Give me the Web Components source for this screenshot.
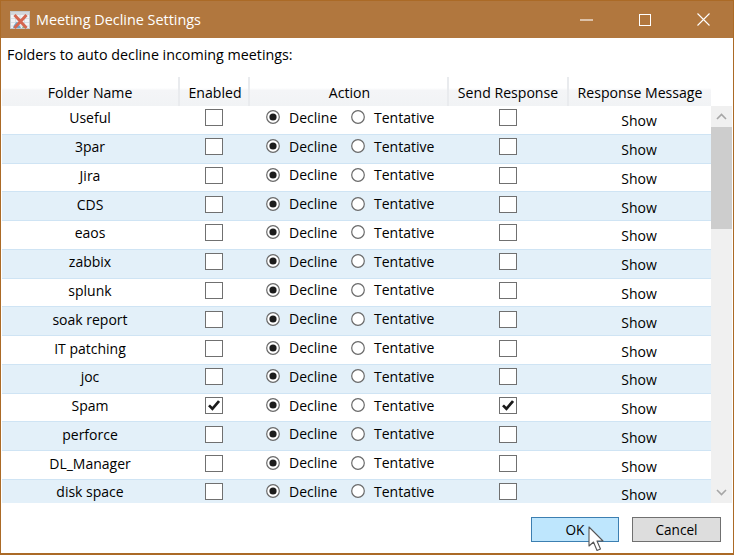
<!DOCTYPE html>
<html><head><meta charset="utf-8"><style>
html,body{margin:0;padding:0;background:#fff}
body{font-family:"Open Sans","Noto Sans",sans-serif;font-size:14px;color:#000}
</style></head><body>
<decline-dialog heading="Meeting Decline Settings"></decline-dialog>
<script>
const def=(n,css,html)=>customElements.define(n,class extends HTMLElement{
  connectedCallback(){if(this.shadowRoot)return;const s=this.attachShadow({mode:'open'});s.innerHTML=`<style>${css}</style>${typeof html==='function'?html(this):html}`;}
});
def('x-check',`:host{display:block;width:18px;height:17px;box-sizing:border-box;border:1.4px solid #707070;background:#fff;position:relative}svg{position:absolute;left:2px;top:2px}`,
 h=>h.hasAttribute('checked')?`<svg width="12" height="11" viewBox="0 0 12 11"><path d="M1 5.4 4.4 8.8 11 1" fill="none" stroke="#1a1a1a" stroke-width="2.7"/></svg>`:'');
def('x-radio',`:host{display:flex;align-items:center;gap:9px}svg{flex:none;display:block}`,
 h=>`<svg width="14" height="14" viewBox="0 0 14 14"><circle cx="7" cy="7" r="6.3" fill="#fff" stroke="#6a6a6a" stroke-width="1.2"/>${h.hasAttribute('checked')?'<circle cx="7" cy="7" r="3.6" fill="#1c1c1c"/>':''}</svg><slot></slot>`);
def('x-btn',`:host{display:flex;align-items:center;justify-content:center;box-sizing:border-box;height:25px;border:1.4px solid #707070;background:#ddd;font-size:13.6px;color:#000}:host([hot]){background:#bee6fd;border-color:#3c7fb1}`,`<slot></slot>`);
def('title-bar',`:host{display:flex;align-items:center;height:37px;background:#b1773e;color:#fff;font-size:14.4px;flex:none}
 .ic{margin:0 6px 0 9px;display:block}.t{flex:1;padding-bottom:1px}
 .b{width:58.5px;height:37px;display:flex;align-items:center;justify-content:center}.b svg{display:block}.end{margin-right:0}`,
 h=>`<svg class="ic" width="20" height="20" viewBox="0 0 20 20"><rect x=".5" y="1.5" width="19" height="17" fill="#f1f3f5" stroke="#c3c6c9"/><rect x="1" y="2" width="18" height="3" fill="#d4d7db"/><path d="M1 8.5H19M1 12.5H19M1 16H19M5.5 5V18M10 5V18M14.5 5V18" stroke="#cfd4da" stroke-width=".7"/><path d="M4 15 7 11.5 11 18H3Z" fill="#6ea7cc"/><path d="M12 18 14 14 17 18Z" fill="#8fb37a"/><path d="M4.5 5 16.5 18M16.5 5 4.5 18" stroke="#d5664f" stroke-width="3"/></svg>
 <span class="t">${h.getAttribute('heading')}</span>
 <span class="b"><svg width="13" height="2" viewBox="0 0 13 2"><path d="M0 1H13" stroke="#fff" stroke-width="1.1"/></svg></span>
 <span class="b"><svg width="12" height="12" viewBox="0 0 12 12"><rect x=".5" y=".5" width="11" height="11" fill="none" stroke="#fff"/></svg></span>
 <span class="b end"><svg width="13" height="13" viewBox="0 0 13 13"><path d="M.5.5 12.5 12.5M12.5.5.5 12.5" stroke="#fff" stroke-width="1.1"/></svg></span>`);
const cols='178px 70px 199px 120px 142px';
def('head-row',`:host{display:grid;grid-template-columns:${cols};height:29px;width:709px;background:linear-gradient(#fff 0,#fff 38%,#f4f5f7 46%,#f1f3f5 100%)}
 span{display:flex;align-items:flex-end;justify-content:center;padding-bottom:4px;box-sizing:border-box;font-size:14.1px;color:#000;border-right:2px solid #e9ebee;white-space:nowrap}span:last-child{border-right:0}span:nth-child(3){padding-left:2px}span:nth-child(4){padding-left:2px}`,
 `<span>Folder Name</span><span>Enabled</span><span>Action</span><span>Send Response</span><span>Response Message</span>`);
def('folder-row',`:host{display:grid;grid-template-columns:${cols};height:28.77px;box-sizing:border-box;border-bottom:1px solid #cfe4f4;background:#fff;font-size:14px;color:#000}
 :host([alt]){background:#e3f0f9}
 .c{display:flex;align-items:center;justify-content:center;padding-bottom:3px;min-width:0;white-space:nowrap}
 .a{display:grid;grid-template-columns:85px auto;justify-content:start;padding-left:16px;padding-bottom:5px;}
 .n{padding-bottom:4px;padding-right:2px}
 .e{padding-bottom:4px;padding-right:2px}
 .s{padding-top:2px;padding-bottom:0;padding-right:2px}`,
 h=>{const ck=h.hasAttribute('checked')?'checked':'';return `<div class="c n">${h.getAttribute('name')}</div><div class="c e"><x-check ${ck}></x-check></div><div class="c a"><x-radio checked>Decline</x-radio><x-radio>Tentative</x-radio></div><div class="c e"><x-check ${ck}></x-check></div><div class="c s">Show</div>`});
def('scroll-bar',`:host{display:flex;flex-direction:column;width:21px;background:#f0f0f0;flex:none}
 .b{height:21px;display:flex;align-items:center;justify-content:center;flex:none}.th{height:102px;background:#cdcdcd;flex:none}.sp{flex:1}`,
 `<div class="b"><svg width="11" height="7" viewBox="0 0 11 7"><path d="M1 6 5.5 1.5 10 6" fill="none" stroke="#a6a6a6" stroke-width="1.6"/></svg></div><div class="th"></div><div class="sp"></div><div class="b"><svg width="11" height="7" viewBox="0 0 11 7"><path d="M1 1 5.5 5.5 10 1" fill="none" stroke="#a6a6a6" stroke-width="1.6"/></svg></div>`);
def('folder-table',`:host{display:flex;flex-direction:column;margin:13px 0 0 1px}.b{display:flex;height:397px;overflow:hidden}.rows{width:709px;flex:none}`,
 ()=>{const names=['Useful','3par','Jira','CDS','eaos','zabbix','splunk','soak report','IT patching','joc','Spam','perforce','DL_Manager','disk space'];
  return `<head-row></head-row><div class="b"><div class="rows">${names.map((n,i)=>`<folder-row name="${n}" ${i%2?'alt':''} ${n==='Spam'?'checked':''}></folder-row>`).join('')}</div><scroll-bar></scroll-bar></div>`});
def('decline-dialog',`:host{display:flex;flex-direction:column;box-sizing:border-box;width:734px;height:555px;border:1px solid #ab6a26;border-width:1px 1px 2px 1px;background:#fff;position:relative;overflow:hidden}
 .lbl{margin:7px 0 0 6px;font-size:14.3px;line-height:19px;color:#000}
 .foot{display:flex;justify-content:flex-end;gap:13px;margin:14px 12px 0 0}
 x-btn.ok{width:88px}x-btn.cancel{width:89px}
 .cur{position:absolute;left:587px;top:525px}`,
 h=>`<title-bar heading="${h.getAttribute('heading')}"></title-bar><div class="lbl">Folders to auto decline incoming meetings:</div><folder-table></folder-table>
 <div class="foot"><x-btn class="ok" hot>OK</x-btn><x-btn class="cancel">Cancel</x-btn></div>
 <svg class="cur" width="16" height="26" viewBox="0 0 16 26"><path d="M1 1V20L5.5 16 9 24.5 12.5 23 9 15H15Z" fill="#fff" stroke="#555" stroke-width="1.1" stroke-linejoin="round"/></svg>`);
</script></body></html>
